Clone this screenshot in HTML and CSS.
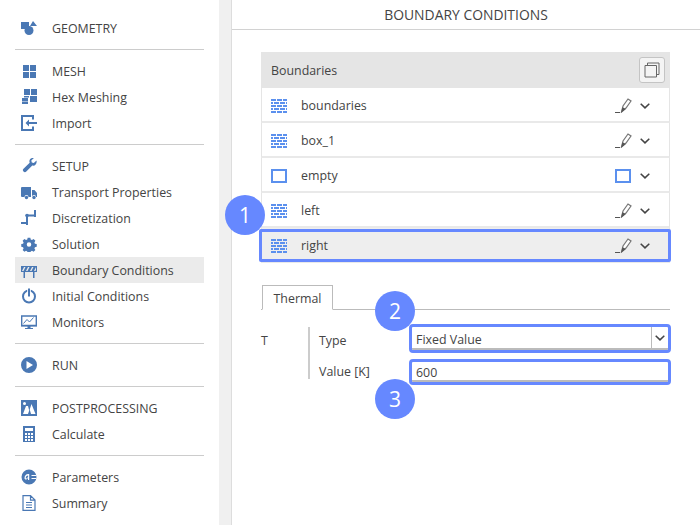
FILE: index.html
```html
<!DOCTYPE html>
<html lang="en">
<head>
    <meta charset="UTF-8">
    <meta name="viewport" content="width=device-width, initial-scale=1.0">
    <title>Boundary Conditions</title>
    <link rel="stylesheet" href="styles.css">
</head>
<body>
    <svg class="defs" width="0" height="0">
        <symbol id="brick" viewBox="0 0 16 14">
            <path d="M0 0h5v2H0zM6 0h5v2H6zM12 0h4v2h-4zM0 3h2v2H0zM3 3h5v2H3zM9 3h5v2H9zM15 3h1v2h-1zM0 6h5v2H0zM6 6h5v2H6zM12 6h4v2h-4zM0 9h2v2H0zM3 9h5v2H3zM9 9h5v2H9zM15 9h1v2h-1zM0 12h5v2H0zM6 12h5v2H6zM12 12h4v2h-4z"/>
        </symbol>
        <symbol id="pencil" viewBox="0 0 17 15">
            <path class="pencil-line" d="M0 14.500h5"/>
            <path class="pencil-body" d="M6.500 14 8 8l5-7 3 2-5 7z"/>
            <path class="pencil-tip" d="M6 14.800 7.500 9.300l3.400 1.700z"/>
        </symbol>
        <symbol id="chevron" viewBox="0 0 10 6">
            <path class="chevron-line" d="M.7.7 5 4.900 9.300.7"/>
        </symbol>
    </svg>

    <aside class="sidebar">
        <div class="nav-group">
            <div class="nav-row">
                <svg class="nav-icon" viewBox="0 0 16 16"><path d="M0 2h8v7H0zM12 1l4 5H9z"/><circle cx="8" cy="10.500" r="4.500"/></svg>
                <span>GEOMETRY</span>
            </div>
        </div>
        <div class="nav-group">
            <div class="nav-row">
                <svg class="nav-icon" viewBox="0 0 16 16"><path d="M2 2h6v6H2zM9 2h6v6H9zM2 9h6v6H2zM9 9h6v6H9z"/></svg>
                <span>MESH</span>
            </div>
            <div class="nav-row">
                <svg class="nav-icon" viewBox="0 0 16 16"><path d="M3 0h6v6H3zM10 0h6v6h-6zM9 7h7v6H9zM1 9h6v3H1zM1 12.500h6V15H1zM3 7h5v1.500H3z"/></svg>
                <span>Hex Meshing</span>
            </div>
            <div class="nav-row">
                <svg class="nav-icon" viewBox="0 0 16 16"><path class="icon-line" d="M12 4.500V1H1v14h11v-3.500" stroke-width="2"/><path d="M16 7v2H8v2.500L4.500 8 8 4.500V7z"/></svg>
                <span>Import</span>
            </div>
        </div>
        <div class="nav-group">
            <div class="nav-row">
                <svg class="nav-icon" viewBox="0 0 16 16"><path d="M15.500 2.500 12.800 5l-2-.6-.5-2L12.900 0c-2-.6-4.400.8-4.500 3 0 .8 0 1.300.3 1.800L2.500 10.700c-1 1-.8 2 0 2.900.8.800 1.900.9 2.800 0l6-6c2.500.8 5-1.500 4.200-5.100z"/></svg>
                <span>SETUP</span>
            </div>
            <div class="nav-row">
                <svg class="nav-icon" viewBox="0 0 16 16"><path d="M1 3h9v10H7.500a2 2 0 0 0-4 0H1a1 1 0 0 1-1-1V4a1 1 0 0 1 1-1zM11 6h2.500L16 9v4h-1a2 2 0 0 0-4 0z"/><circle cx="5.500" cy="13.500" r="1.700"/><circle cx="13" cy="13.500" r="1.700"/></svg>
                <span>Transport Properties</span>
            </div>
            <div class="nav-row">
                <svg class="nav-icon" viewBox="0 0 16 16"><path class="icon-line" d="M0 13h6V5.500h7.500M14 0v7M6 11v4" stroke-width="2"/><circle cx="6" cy="5.500" r="1.800"/></svg>
                <span>Discretization</span>
            </div>
            <div class="nav-row">
                <svg class="nav-icon" viewBox="0 0 16 16"><path fill-rule="evenodd" d="M6.500 1h3l.4 2 1.400.6 1.800-1.100 2 2-1.100 1.800.6 1.400 2 .4v3l-2 .4-.6 1.400 1.100 1.800-2 2-1.800-1.100-1.400.6-.4 2h-3l-.4-2-1.400-.6-1.800 1.100-2-2 1.100-1.800-.6-1.400-2-.4v-3l2-.4.6-1.400-1.100-1.800 2-2 1.800 1.100 1.400-.6zM8 6a2.500 2.500 0 1 0 0 5 2.500 2.500 0 0 0 0-5z" transform="translate(.8 .8) scale(.9)"/></svg>
                <span>Solution</span>
            </div>
            <div class="nav-row active">
                <svg class="nav-icon" viewBox="0 0 16 16"><path fill-rule="evenodd" d="M0 4h16v6H0zM3 5 1 9h1.500l2-4zM7 5 5 9h1.500l2-4zM11 5 9 9h1.500l2-4zM15 5l-2 4h1.500L15 8z"/><path d="M2.500 10H4v6H2.500zM12 10h1.500v6H12z"/></svg>
                <span>Boundary Conditions</span>
            </div>
            <div class="nav-row">
                <svg class="nav-icon" viewBox="0 0 16 16"><circle class="icon-line" cx="8" cy="8.500" r="6" stroke-width="2"/><path d="M6.200 0h3.600v8.500H6.200z" class="icon-cut"/><path d="M7 .500h2v8H7z"/></svg>
                <span>Initial Conditions</span>
            </div>
            <div class="nav-row">
                <svg class="nav-icon" viewBox="0 0 16 16"><path class="icon-line" d="M.7 2h14.600v9.500H.7z" stroke-width="1.400"/><path class="icon-line" d="M2.500 9.500l3.500-4 2.500 2.500 4-4.500" stroke-width="1"/><path d="M0 11h16v1.500H9.500V14H12v1H4v-1h2.500v-1.500H0z"/></svg>
                <span>Monitors</span>
            </div>
        </div>
        <div class="nav-group">
            <div class="nav-row">
                <svg class="nav-icon" viewBox="0 0 16 16"><path fill-rule="evenodd" d="M8 0a8 8 0 1 1 0 16A8 8 0 0 1 8 0zM5.500 4v8L12 8z"/></svg>
                <span>RUN</span>
            </div>
        </div>
        <div class="nav-group">
            <div class="nav-row">
                <svg class="nav-icon" viewBox="0 0 16 16"><path fill-rule="evenodd" d="M0 0h16v16H0zM3.500 2a1.500 1.500 0 1 0 0 3 1.500 1.500 0 0 0 0-3zM5 6l-3 8h5l1.200-3.500L7 6zM10.500 4 8.700 9.500 10 14h4.500z"/></svg>
                <span>POSTPROCESSING</span>
            </div>
            <div class="nav-row">
                <svg class="nav-icon" viewBox="0 0 16 16"><path fill-rule="evenodd" d="M2 0h12v16H2zM4 2v3h8V2zM4 7v2h2V7zM7 7v2h2V7zM10 7v2h2V7zM4 10v2h2v-2zM7 10v2h2v-2zM10 10v2h2v-2zM4 13v2h2v-2zM7 13v2h2v-2zM10 13v2h2v-2z"/></svg>
                <span>Calculate</span>
            </div>
        </div>
        <div class="nav-group">
            <div class="nav-row">
                <svg class="nav-icon" viewBox="0 0 16 16"><path fill-rule="evenodd" d="M8 .500a7.500 7.500 0 1 1 0 15 7.500 7.500 0 0 1 0-15zM10.500 6v1H15V6zM10.500 9v1H15V9zM7.200 5C5 5 3.500 7 3.500 9c0 1.500 1.500 2 2.500 1l1-1v2h1.200V5zm-.1 1.500V8L5.800 9.300c-.6.500-1 .2-1-.4 0-1 .8-2.400 2.300-2.400z"/></svg>
                <span>Parameters</span>
            </div>
            <div class="nav-row">
                <svg class="nav-icon" viewBox="0 0 16 16"><path class="icon-line" d="M2 .6h7.500l4.500 4.500v10.300H2zM9.500.6v4.500H14M5 7.500h6M5 10h6M5 12.500h6" stroke-width="1.200"/></svg>
                <span>Summary</span>
            </div>
        </div>
    </aside>

    <main class="content">
        <h1 class="page-title">BOUNDARY CONDITIONS</h1>

        <section class="boundaries">
            <div class="boundaries-head">
                <span>Boundaries</span>
                <button class="copy-btn" type="button">
                    <svg width="16" height="16" viewBox="0 0 16 16"><path class="copy-line" d="M1 3.500h11.500V15H1zM3.500 3.500V1H15v11.500h-2.500"/></svg>
                </button>
            </div>
            <div class="boundary-row">
                <svg class="row-icon"><use href="#brick"/></svg>
                <span class="row-name">boundaries</span>
                <svg class="pencil"><use href="#pencil"/></svg>
                <svg class="chevron"><use href="#chevron"/></svg>
            </div>
            <div class="boundary-row">
                <svg class="row-icon"><use href="#brick"/></svg>
                <span class="row-name">box_1</span>
                <svg class="pencil"><use href="#pencil"/></svg>
                <svg class="chevron"><use href="#chevron"/></svg>
            </div>
            <div class="boundary-row">
                <span class="empty-box"></span>
                <span class="row-name">empty</span>
                <span class="empty-box small"></span>
                <svg class="chevron"><use href="#chevron"/></svg>
            </div>
            <div class="boundary-row">
                <svg class="row-icon"><use href="#brick"/></svg>
                <span class="row-name">left</span>
                <svg class="pencil"><use href="#pencil"/></svg>
                <svg class="chevron"><use href="#chevron"/></svg>
            </div>
            <div class="boundary-row selected">
                <svg class="row-icon"><use href="#brick"/></svg>
                <span class="row-name">right</span>
                <svg class="pencil"><use href="#pencil"/></svg>
                <svg class="chevron"><use href="#chevron"/></svg>
            </div>
        </section>

        <div class="tabs">
            <div class="tab">Thermal</div>
        </div>

        <section class="field-group">
            <div class="field-var">T</div>
            <div class="field-list">
                <div class="field field-select">
                    <label>Type</label>
                    <div class="select marked">
                        <span class="select-value">Fixed Value</span>
                        <span class="select-arrow"><svg class="chevron"><use href="#chevron"/></svg></span>
                    </div>
                </div>
                <div class="field field-input">
                    <label>Value [K]</label>
                    <div class="input marked">600</div>
                </div>
            </div>
        </section>

        <div class="step step-1">1</div>
        <div class="step step-2">2</div>
        <div class="step step-3">3</div>
    </main>
</body>
</html>
```

FILE: styles.css
```css
* {
    box-sizing: border-box;
}
html, body {
    height: 100%;
}
body {
    margin: 0;
    display: flex;
    height: 525px;
    overflow: hidden;
    background-color: #f0f0f0;
    color: #444;
    font-family: "Open Sans", sans-serif;
    font-size: 12.400px;
}
.defs {
    position: absolute;
}

/* sidebar */
.sidebar {
    width: 219px;
    height: 100%;
    background-color: #fff;
    padding: 15px 15px 0;
}
.nav-group {
    padding-bottom: 8px;
    margin-bottom: 8px;
    border-bottom: 1px solid #ccc;
    width: 189px;
}
.nav-group:last-child {
    border-bottom: none;
}
.nav-row {
    display: flex;
    align-items: center;
    height: 26px;
    padding-left: 6px;
}
.nav-row.active {
    background-color: #ebebeb;
}
.nav-icon {
    width: 16px;
    height: 16px;
    margin-right: 15px;
    fill: #4a78b4;
    flex-shrink: 0;
}
.icon-line {
    fill: none;
    stroke: #4a78b4;
}
.icon-cut {
    fill: #fff;
}

/* main panel */
.content {
    position: relative;
    width: 469px;
    margin-left: 12px;
    background-color: #fff;
    border-left: 1px solid #ddd;
    padding: 0 29px;
}
.page-title {
    margin: 0 -29px;
    height: 30px;
    line-height: 29px;
    border-bottom: 1px solid #d2d2d2;
    font-size: 13.900px;
    font-weight: 400;
    text-align: center;
}
.boundaries {
    margin: 22px 0 0;
    width: 409px;
}
.boundaries-head {
    display: flex;
    align-items: center;
    justify-content: space-between;
    height: 36px;
    padding: 0 5px 0 10px;
    background-color: #e5e5e5;
}
.copy-btn {
    display: flex;
    align-items: center;
    justify-content: center;
    width: 26px;
    height: 26px;
    padding: 0;
    background-color: #f4f4f4;
    border: 1px solid #c4c4c4;
    border-radius: 3px;
}
.copy-line {
    fill: none;
    stroke: #666;
    stroke-width: 1;
}
.boundary-row {
    position: relative;
    display: flex;
    align-items: center;
    height: 35px;
    padding: 2px 19px 0 9px;
    border-left: 1px solid #e5e5e5;
    border-right: 1px solid #e5e5e5;
    border-bottom: 2px solid #e9e9e9;
}
.boundary-row.selected {
    background-color: #eee;
}
.boundary-row.selected::after {
    content: "";
    position: absolute;
    top: 1px;
    bottom: -1px;
    left: -3px;
    right: -2px;
    border: 3px solid #6688ff;
    border-radius: 2px;
}
.row-icon {
    width: 16px;
    height: 14px;
    fill: #5b90ee;
    margin-right: 14px;
}
.row-name {
    flex: 1;
}
.pencil {
    width: 17px;
    height: 15px;
    margin-right: 8px;
}
.pencil-line {
    fill: none;
    stroke: #555;
    stroke-width: 1;
}
.pencil-body {
    fill: #fff;
    stroke: #777;
    stroke-width: 1.200;
}
.selected .pencil-body {
    fill: #eee;
}
.pencil-tip {
    fill: #555;
}
.chevron {
    width: 10px;
    height: 6px;
}
.chevron-line {
    fill: none;
    stroke: #444;
    stroke-width: 1.500;
}
.empty-box {
    width: 16px;
    height: 14px;
    border: 2px solid #5b90ee;
    margin-right: 14px;
}
.empty-box.small {
    margin-right: 9px;
}

/* tabs */
.tabs {
    display: flex;
    width: 409px;
    margin-top: 22px;
    border-bottom: 1px solid #bbb;
    height: 25px;
}
.tab {
    width: 71px;
    height: 25px;
    padding-top: 4px;
    text-align: center;
    background-color: #fff;
    border: 1px solid #bbb;
    border-bottom-color: #fff;
    margin-left: 1px;
}

/* fields */
.field-group {
    display: flex;
    margin-top: 17px;
    width: 407px;
}
.field-var {
    width: 47px;
    padding-top: 5px;
}
.field-list {
    flex: 1;
    border-left: 2px solid #ccc;
    padding-left: 9px;
    height: 52px;
}
.field {
    display: flex;
}
.field label {
    width: 93px;
    flex-shrink: 0;
    padding-top: 5px;
}
.field-select {
    height: 23px;
    margin-bottom: 12px;
}
.field-input {
    height: 20px;
}
.field-input label {
    padding-top: 1px;
}
.select, .input {
    flex: 1;
    display: flex;
    align-items: center;
    background-color: #fff;
    border-bottom: 2px solid #bbb;
}
.input {
    padding: 2px 0 0 4px;
}
.select-value {
    flex: 1;
    padding: 3px 0 0 4px;
}
.select-arrow {
    display: flex;
    align-items: center;
    justify-content: center;
    width: 17px;
    height: 100%;
    border-left: 1px solid #bbb;
}
.marked {
    outline: 3px solid #6688ff;
    border-radius: 1px;
}

/* numbered markers */
.step {
    position: absolute;
    width: 40px;
    height: 40px;
    border-radius: 50%;
    background-color: #6688ff;
    color: #fff;
    font-size: 21px;
    line-height: 40px;
    text-align: center;
}
.step-1 {
    left: -7px;
    top: 195px;
}
.step-2 {
    left: 143px;
    top: 291px;
}
.step-3 {
    left: 143px;
    top: 379px;
}
```
